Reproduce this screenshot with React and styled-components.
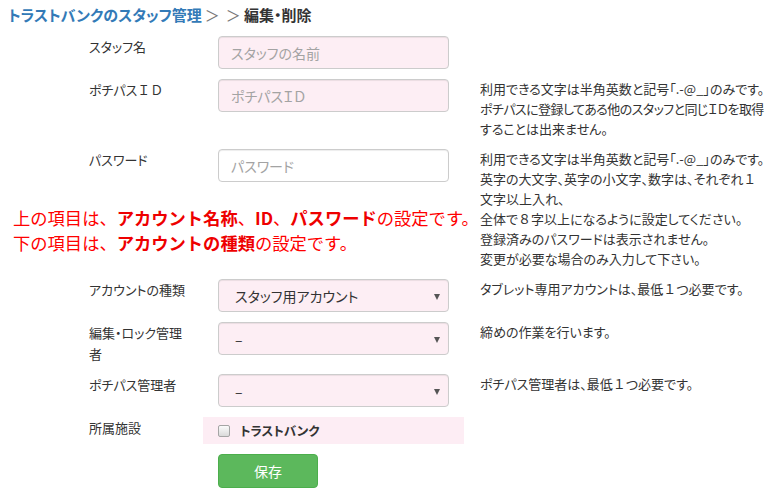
import React from "react";
import styled, { createGlobalStyle } from "styled-components";

const GlobalStyle = createGlobalStyle`
  html, body { margin: 0; padding: 0; background: #fff; }
  body {
    font-family: "Noto Sans CJK JP", "Noto Sans", sans-serif;
    font-size: 14px;
    color: #333;
  }
  * { box-sizing: border-box; }
`;

const Page = styled.div`
  padding: 0 8px;
`;

const Title = styled.h1`
  margin: 0;
  font-size: 15px;
  line-height: 30px;
  font-weight: 700;
  font-feature-settings: "palt";
  color: #333;
`;

const Crumb = styled.span`
  color: #337ab7;
`;

const Sep = styled.span`
  color: #777;
  font-weight: 400;
  font-feature-settings: normal;
  margin: ${(p) => (p.$last ? "0 3px 0 0" : "0 6px 0 3px")};
`;

/* full-width letters and digits keep their full em width */
const Wide = styled.span`
  font-feature-settings: normal;
`;

/* a help line that runs right up to the page edge */
const Tight = styled.span`
  letter-spacing: -0.55px;
`;

const Form = styled.form`
  padding-top: 6px;
`;

const Row = styled.div`
  display: grid;
  grid-template-columns: 66px 129px 261px 1fr;
  grid-template-rows: ${(p) => p.$rows || "auto"};
  margin-bottom: 10px;
`;

const Label = styled.label`
  grid-column: 2;
  grid-row: 1;
  padding: 0 15px;
  font-size: 13px;
  line-height: 21px;
  white-space: nowrap;
  font-feature-settings: "palt";
`;

const Control = styled.div`
  grid-column: 3;
  grid-row: 1;
  padding: ${(p) => (p.$tinted ? "4px 15px 3px" : "0 15px")};
  background: ${(p) => (p.$tinted ? "#fdedf4" : "transparent")};
  display: ${(p) => (p.$tinted ? "flex" : "block")};
  align-items: center;
`;

const Help = styled.div`
  grid-column: 4;
  grid-row: ${(p) => (p.$span ? "1 / 3" : "1")};
  padding-left: 16px;
  font-size: 13px;
  line-height: 20px;
  font-feature-settings: "palt";
  white-space: nowrap;
`;

const Note = styled.p`
  grid-column: 1 / 4;
  grid-row: 2;
  margin: 23px 0 0;
  padding-left: 5px;
  color: #ff0000;
  font-size: 17.3px;
  line-height: 25px;
  white-space: nowrap;
  b { font-weight: 700; color: #ee0000; }
`;

const TextInput = styled.input`
  display: block;
  width: 100%;
  height: 33px;
  padding: 6px 12px;
  border: 1px solid #ccc;
  border-radius: 4px;
  background: ${(p) => (p.$plain ? "#fff" : "#fdeef4")};
  font-family: inherit;
  font-size: 14px;
  font-feature-settings: "palt";
  color: #555;
  box-shadow: inset 0 1px 1px rgba(0, 0, 0, 0.075);
  &::placeholder { color: #a3a3a3; }
`;

const SelectWrap = styled.div`
  position: relative;
  &::after {
    content: "";
    position: absolute;
    right: 9px;
    top: 15px;
    border-left: 3.5px solid transparent;
    border-right: 3.5px solid transparent;
    border-top: 6px solid #555;
    pointer-events: none;
  }
`;

const Select = styled.select`
  display: block;
  width: 100%;
  height: 33px;
  padding: 0 24px 0 16px;
  appearance: none;
  border: 1px solid #ccc;
  border-radius: 4px;
  background: #fdeef4;
  font-family: inherit;
  font-size: 14px;
  font-feature-settings: "palt";
  color: #333;
  box-shadow: inset 0 1px 1px rgba(0, 0, 0, 0.075);
`;

const Check = styled.input`
  appearance: none;
  width: 12px;
  height: 12px;
  margin: 0 10px 0 0;
  border: 1px solid #a5a5a5;
  border-radius: 2px;
  background: linear-gradient(#fbfbfb, #dadada);
`;

const CheckText = styled.span`
  font-size: 12.5px;
  font-weight: 700;
  line-height: 20px;
  font-feature-settings: "palt";
  color: #333;
`;

const SaveButton = styled.button`
  width: 100px;
  height: 34px;
  border: 1px solid #4cae4c;
  border-radius: 4px;
  background: #5cb85c;
  color: #fff;
  font-family: inherit;
  font-size: 14px;
`;

function SelectField({ value }) {
  return (
    <SelectWrap>
      <Select defaultValue={value}>
        <option value={value}>{value}</option>
      </Select>
    </SelectWrap>
  );
}

export default function App() {
  return (
    <Page>
      <GlobalStyle />
      <Title>
        <Crumb>トラストバンクのスタッフ管理</Crumb>
        <Sep>＞</Sep>
        <Sep $last>＞</Sep>
        編集・削除
      </Title>
      <Form onSubmit={(e) => e.preventDefault()}>
        <Row>
          <Label>スタッフ名</Label>
          <Control>
            <TextInput placeholder="スタッフの名前" />
          </Control>
        </Row>

        <Row>
          <Label>
            ポチパス<Wide>ＩＤ</Wide>
          </Label>
          <Control>
            <TextInput placeholder="ポチパスＩＤ" />
          </Control>
          <Help>
            利用できる文字は半角英数と記号「.-@_」のみです。
            <br />
            <Tight>ポチパスに登録してある他のスタッフと同じＩＤを取得</Tight>
            <br />
            することは出来ません。
          </Help>
        </Row>

        <Row $rows="33px auto">
          <Label>パスワード</Label>
          <Control>
            <TextInput type="password" $plain placeholder="パスワード" />
          </Control>
          <Help $span>
            利用できる文字は半角英数と記号「.-@_」のみです。
            <br />
            英字の大文字、英字の小文字、数字は、それぞれ<Wide>１</Wide>
            <br />
            文字以上入れ、
            <br />
            全体で<Wide>８</Wide>字以上になるように設定してください。
            <br />
            登録済みのパスワードは表示されません。
            <br />
            変更が必要な場合のみ入力して下さい。
          </Help>
          <Note>
            上の項目は、<b>アカウント名称</b>、<b>ID</b>、<b>パスワード</b>の設定です。
            <br />
            下の項目は、<b>アカウントの種類</b>の設定です。
          </Note>
        </Row>

        <Row>
          <Label>アカウントの種類</Label>
          <Control>
            <SelectField value="スタッフ用アカウント" />
          </Control>
          <Help>
            タブレット専用アカウントは、最低<Wide>１</Wide>つ必要です。
          </Help>
        </Row>

        <Row>
          <Label>
            編集・ロック管理
            <br />者
          </Label>
          <Control>
            <SelectField value="–" />
          </Control>
          <Help>締めの作業を行います。</Help>
        </Row>

        <Row>
          <Label>ポチパス管理者</Label>
          <Control>
            <SelectField value="–" />
          </Control>
          <Help>
            ポチパス管理者は、最低<Wide>１</Wide>つ必要です。
          </Help>
        </Row>

        <Row>
          <Label>所属施設</Label>
          <Control $tinted>
            <Check type="checkbox" />
            <CheckText>トラストバンク</CheckText>
          </Control>
        </Row>

        <Row>
          <Control>
            <SaveButton type="submit">保存</SaveButton>
          </Control>
        </Row>
      </Form>
    </Page>
  );
}
